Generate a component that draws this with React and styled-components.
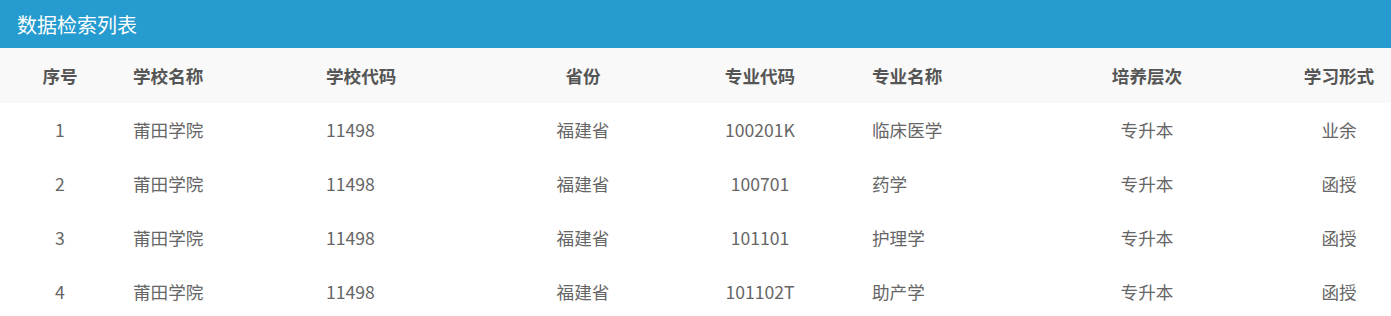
import React from "react";
import styled, { createGlobalStyle } from "styled-components";

const GlobalStyle = createGlobalStyle`
  body {
    margin: 0;
    background: #fff;
    font-family: "Microsoft YaHei", "Noto Sans CJK SC", sans-serif;
  }
`;

const Panel = styled.div`
  width: 1391px;
`;

const TitleBar = styled.div`
  height: 48px;
  display: flex;
  align-items: center;
  padding-left: 17px;
  background-color: #259bcf;
  color: #fff;
  font-size: 20px;
`;

const Grid = styled.div`
  display: grid;
  grid-template-columns: 120px 193px 170px 200px 154px 170px 280px 104px;
`;

const Row = styled.div`
  display: contents;
`;

const Cell = styled.div`
  height: ${(p) => (p.$head ? "55px" : "54px")};
  display: flex;
  align-items: center;
  justify-content: ${(p) => (p.$pad ? "flex-start" : "center")};
  padding-left: ${(p) => p.$pad || 0}px;
  padding-bottom: 1px;
  box-sizing: border-box;
  background: ${(p) => (p.$head ? "#f9f9f9" : "#fff")};
  color: ${(p) => (p.$head ? "#555" : "#666")};
  font-weight: ${(p) => (p.$head ? 700 : 400)};
  font-size: 17.6px;
  white-space: nowrap;
`;

const columns = [
  { title: "序号" },
  { title: "学校名称", pad: 13 },
  { title: "学校代码", pad: 13 },
  { title: "省份" },
  { title: "专业代码" },
  { title: "专业名称", pad: 35 },
  { title: "培养层次" },
  { title: "学习形式" },
];

const rows = [
  ["1", "莆田学院", "11498", "福建省", "100201K", "临床医学", "专升本", "业余"],
  ["2", "莆田学院", "11498", "福建省", "100701", "药学", "专升本", "函授"],
  ["3", "莆田学院", "11498", "福建省", "101101", "护理学", "专升本", "函授"],
  ["4", "莆田学院", "11498", "福建省", "101102T", "助产学", "专升本", "函授"],
];

export default function App() {
  return (
    <Panel>
      <GlobalStyle />
      <TitleBar>数据检索列表</TitleBar>
      <Grid>
        <Row>
          {columns.map((c) => (
            <Cell key={c.title} $head $pad={c.pad}>
              {c.title}
            </Cell>
          ))}
        </Row>
        {rows.map((r) => (
          <Row key={r[0]}>
            {r.map((v, i) => (
              <Cell key={i} $pad={columns[i].pad}>
                {v}
              </Cell>
            ))}
          </Row>
        ))}
      </Grid>
    </Panel>
  );
}
